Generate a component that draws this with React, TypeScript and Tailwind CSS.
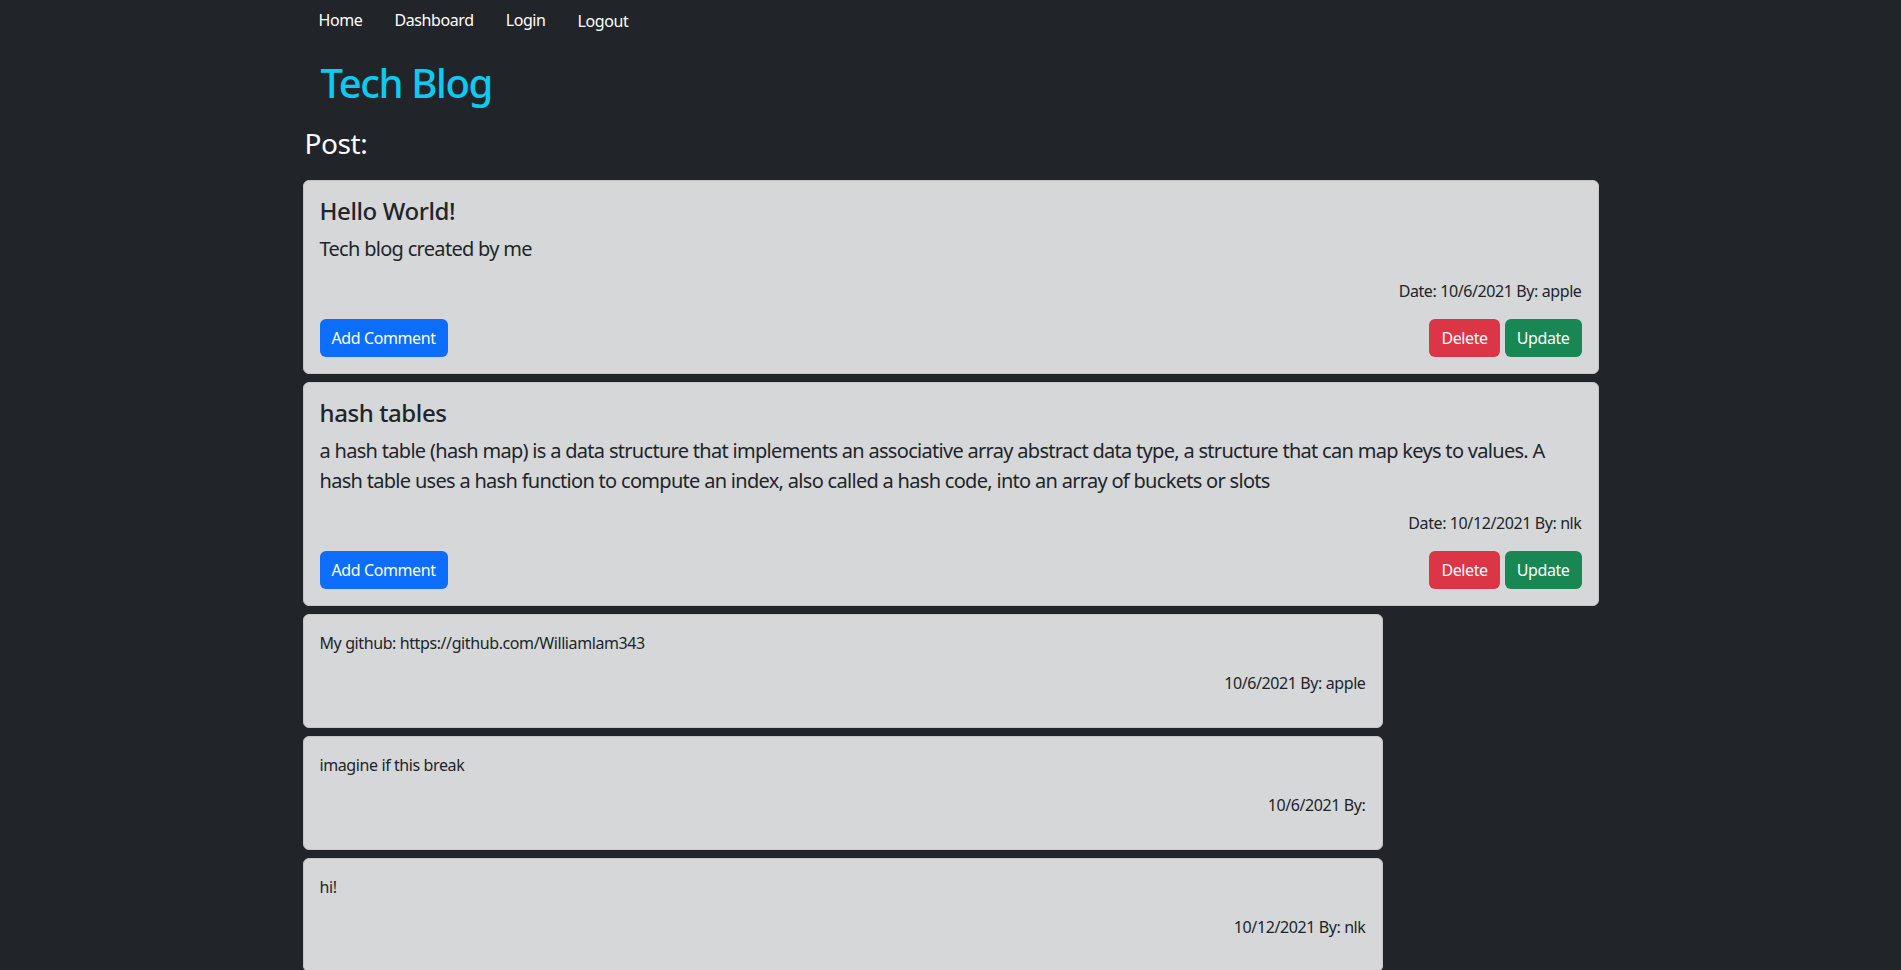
import React from "react"

type Post = { title: string; body: string; date: string; author: string }
type Comment = { text: string; date: string; author: string }

const posts: Post[] = [
  { title: "Hello World!", body: "Tech blog created by me", date: "10/6/2021", author: "apple" },
  {
    title: "hash tables",
    body: "a hash table (hash map) is a data structure that implements an associative array abstract data type, a structure that can map keys to values. A hash table uses a hash function to compute an index, also called a hash code, into an array of buckets or slots",
    date: "10/12/2021",
    author: "nlk",
  },
]

const comments: Comment[] = [
  { text: "My github: https://github.com/Williamlam343", date: "10/6/2021", author: "apple" },
  { text: "imagine if this break", date: "10/6/2021", author: "" },
  { text: "hi!", date: "10/12/2021", author: "nlk" },
]

const PostCard = ({ post }: { post: Post }) => {
  return (
    <div className="rounded-[6px] border border-[#c4c5c7] bg-[#d6d7d9] p-4">
      <h4 className="mb-[9px] text-[24px] font-medium leading-[28px]">{post.title}</h4>
      <p className="mb-[15px] text-[20px] leading-[30px] tracking-[-0.035em]">{post.body}</p>
      <p className="mb-4 text-right text-base leading-6">
        Date: {post.date} By: {post.author}
      </p>
      <div className="flex items-center justify-between">
        <button className="h-[38px] rounded-[6px] bg-[#0d6efd] px-3 text-base text-white">Add Comment</button>
        <div className="flex gap-[5px]">
          <button className="h-[38px] rounded-[6px] bg-[#dc3545] px-3 text-base text-white">Delete</button>
          <button className="h-[38px] rounded-[6px] bg-[#198754] px-3 text-base text-white">Update</button>
        </div>
      </div>
    </div>
  )
}

const CommentCard = ({ comment }: { comment: Comment }) => {
  return (
    <div className="w-[1080px] rounded-[6px] border border-[#c4c5c7] bg-[#d6d7d9] p-4">
      <p className="mb-4 text-base leading-6">{comment.text}</p>
      <p className="mb-4 text-right text-base leading-6">
        {comment.date} By: {comment.author}
      </p>
    </div>
  )
}

export default function App() {
  return (
    <div className="min-h-screen bg-[#212529] font-['Noto_Sans',sans-serif] tracking-[-0.025em] text-[#212529]">
      <div className="mx-auto w-[1296px]">
        <nav className="flex items-center">
          <a className="px-4 py-2 text-base leading-6 text-white" href="#">Home</a>
          <a className="px-4 py-2 text-base leading-6 text-white" href="#">Dashboard</a>
          <a className="px-4 py-2 text-base leading-6 text-white" href="#">Login</a>
          <a className="px-4 pb-[7px] pt-[9px] text-base leading-6 text-white" href="#">Logout</a>
        </nav>
        <h1 className="mt-[19px] pl-[18px] text-[40px] font-medium leading-[48px] tracking-[-0.035em] text-[#0dcaf0]">
          Tech Blog
        </h1>
        <h3 className="mt-[19px] pl-[2px] text-[28px] leading-[34px] text-white">Post:</h3>
        <div className="mt-[20px] flex flex-col gap-2">
          {posts.map((p) => (
            <PostCard key={p.title} post={p} />
          ))}
          {comments.map((c, i) => (
            <CommentCard key={i} comment={c} />
          ))}
        </div>
      </div>
    </div>
  )
}
